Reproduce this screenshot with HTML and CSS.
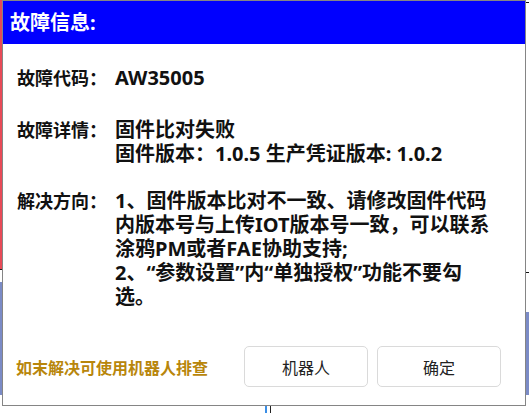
FILE: index.html
```html
<!DOCTYPE html>
<html lang="zh-CN">
<head>
  <meta charset="UTF-8">
  <title>故障信息</title>
  <link rel="stylesheet" href="styles.css">
</head>
<body>
  <!-- page behind the dialog -->
  <div class="backdrop">
    <div class="strip-red"></div>
    <div class="strip-blue"></div>
    <div class="strip-blue right"></div>
    <div class="tick tick-top"></div>
    <div class="tick tick-mid"></div>
    <div class="cursor-bar"></div>
    <div class="cursor-line"></div>
  </div>

  <div class="dialog">
    <div class="dialog-title">故障信息:</div>

    <div class="dialog-body">
      <div class="info-row">
        <div class="info-label">故障代码：</div>
        <div class="info-value">AW35005</div>
      </div>
      <div class="info-row detail">
        <div class="info-label">故障详情：</div>
        <div class="info-value">固件比对失败<br>固件版本：1.0.5 生产凭证版本: 1.0.2</div>
      </div>
      <div class="info-row solution">
        <div class="info-label">解决方向：</div>
        <div class="info-value">1、固件版本比对不一致、请修改固件代码<br>内版本号与上传IOT版本号一致，可以联系<br>涂鸦PM或者FAE协助支持;<br>2、“参数设置”内“单独授权”功能不要勾<br>选。</div>
      </div>
    </div>

    <div class="dialog-footer">
      <span class="hint">如末解决可使用机器人排查</span>
      <div class="actions">
        <button class="btn">机器人</button>
        <button class="btn">确定</button>
      </div>
    </div>
  </div>
</body>
</html>
```

FILE: styles.css
```css
* {
  margin: 0;
  padding: 0;
  box-sizing: border-box;
}

body {
  width: 529px;
  height: 413px;
  overflow: hidden;
  position: relative;
  background: #ffffff;
  font-family: "Noto Sans", "Noto Sans CJK SC", sans-serif;
  color: #111111;
}

/* Backdrop pieces peeking out around the dialog */
.backdrop div {
  position: absolute;
}

.strip-red {
  left: 0;
  top: 0;
  width: 2px;
  height: 270px;
  background: #e84a57;
  border-bottom: 1px solid #222;
}

.strip-blue {
  left: 0;
  top: 282px;
  width: 3px;
  height: 113px;
  background: #7b8bc6;
}

.strip-blue.right {
  left: 525px;
  top: 312px;
  width: 4px;
  height: 83px;
}

.tick {
  left: 526px;
  width: 3px;
  height: 1px;
  background: #111;
}

.tick-top { top: 2px; }
.tick-mid { top: 272px; }

.cursor-bar {
  left: 265px;
  top: 406px;
  width: 2px;
  height: 7px;
  background: #3a8ee6;
}

.cursor-line {
  left: 270px;
  top: 406px;
  width: 1px;
  height: 7px;
  background: #222;
}

/* Dialog */
.dialog {
  position: relative;
  margin-left: 2px;
  width: 524px;
  height: 406px;
  border: 1px solid #858585;
  background: #ffffff;
  display: flex;
  flex-direction: column;
}

.dialog-title {
  height: 43px;
  line-height: 43px;
  padding-left: 7px;
  background: #0000ff;
  color: #ffffff;
  font-size: 20px;
  font-weight: bold;
}

.dialog-body {
  padding: 22px 0 0 14px;
}

.info-row {
  display: grid;
  grid-template-columns: 98px 1fr;
  font-weight: bold;
  line-height: 24px;
}

.info-row.detail {
  margin-top: 28px;
}

.info-row.solution {
  margin-top: 23px;
}

.info-label {
  font-size: 18px;
}

.info-value {
  font-size: 20px;
}

.dialog-footer {
  margin-top: auto;
  padding: 0 24px 18px 13px;
  display: flex;
  align-items: center;
  justify-content: space-between;
}

.hint {
  color: #b8860b;
  font-size: 16px;
  font-weight: bold;
}

.actions {
  display: flex;
  gap: 9px;
}

.btn {
  width: 124px;
  height: 41px;
  border: 1px solid #dadada;
  border-radius: 5px;
  background: #ffffff;
  color: #222222;
  font-family: "Noto Sans", "Noto Sans CJK SC", sans-serif;
  font-size: 16px;
}
```
